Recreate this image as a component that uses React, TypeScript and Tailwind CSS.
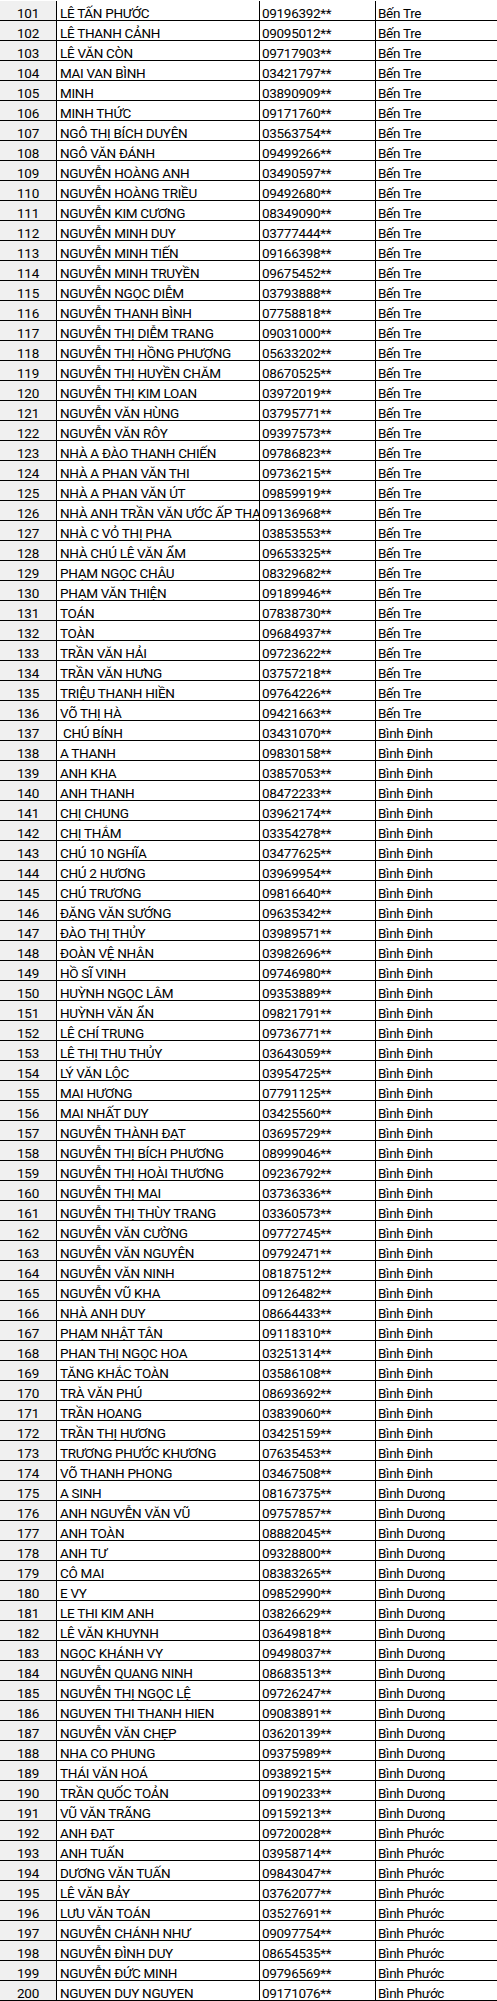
import React from "react";

type Row = [number, string, string, string];

const BT = "Bến Tre";
const BD = "Bình Định";
const BDu = "Bình Dương";
const BP = "Bình Phước";

const rows: Row[] = [
  [101, "LÊ TẤN PHƯỚC", "09196392**", BT],
  [102, "LÊ THANH CẢNH", "09095012**", BT],
  [103, "LÊ VĂN CÒN", "09717903**", BT],
  [104, "MAI VAN BÌNH", "03421797**", BT],
  [105, "MINH", "03890909**", BT],
  [106, "MINH THỨC", "09171760**", BT],
  [107, "NGÔ THỊ BÍCH DUYÊN", "03563754**", BT],
  [108, "NGÔ VĂN ĐÁNH", "09499266**", BT],
  [109, "NGUYỄN HOÀNG ANH", "03490597**", BT],
  [110, "NGUYỄN HOÀNG TRIỀU", "09492680**", BT],
  [111, "NGUYỄN KIM CƯƠNG", "08349090**", BT],
  [112, "NGUYỄN MINH DUY", "03777444**", BT],
  [113, "NGUYỄN MINH TIẾN", "09166398**", BT],
  [114, "NGUYỄN MINH TRUYỀN", "09675452**", BT],
  [115, "NGUYỄN NGỌC DIỄM", "03793888**", BT],
  [116, "NGUYỄN THANH BÌNH", "07758818**", BT],
  [117, "NGUYỄN THỊ DIỄM TRANG", "09031000**", BT],
  [118, "NGUYỄN THỊ HỒNG PHƯỢNG", "05633202**", BT],
  [119, "NGUYỄN THỊ HUYỀN CHĂM", "08670525**", BT],
  [120, "NGUYỄN THỊ KIM LOAN", "03972019**", BT],
  [121, "NGUYỄN VĂN HÙNG", "03795771**", BT],
  [122, "NGUYỄN VĂN RÔY", "09397573**", BT],
  [123, "NHÀ A ĐÀO THANH CHIẾN", "09786823**", BT],
  [124, "NHÀ A PHAN VĂN THI", "09736215**", BT],
  [125, "NHÀ A PHAN VĂN ÚT", "09859919**", BT],
  [126, "NHÀ ANH TRẦN VĂN ƯỚC ẤP THẠNH", "09136968**", BT],
  [127, "NHÀ C VỎ THỊ PHA", "03853553**", BT],
  [128, "NHÀ CHÚ LÊ VĂN ẨM", "09653325**", BT],
  [129, "PHẠM NGỌC CHÂU", "08329682**", BT],
  [130, "PHẠM VĂN THIỆN", "09189946**", BT],
  [131, "TOÁN", "07838730**", BT],
  [132, "TOÀN", "09684937**", BT],
  [133, "TRẦN VĂN HẢI", "09723622**", BT],
  [134, "TRẦN VĂN HƯNG", "03757218**", BT],
  [135, "TRIỆU THANH HIỀN", "09764226**", BT],
  [136, "VÕ THỊ HÀ", "09421663**", BT],
  [137, " CHÚ BÍNH", "03431070**", BD],
  [138, "A THANH", "09830158**", BD],
  [139, "ANH KHA", "03857053**", BD],
  [140, "ANH THANH", "08472233**", BD],
  [141, "CHỊ CHUNG", "03962174**", BD],
  [142, "CHỊ THẮM", "03354278**", BD],
  [143, "CHÚ 10 NGHĨA", "03477625**", BD],
  [144, "CHÚ 2 HƯƠNG", "03969954**", BD],
  [145, "CHÚ TRƯƠNG", "09816640**", BD],
  [146, "ĐẶNG VĂN SƯỚNG", "09635342**", BD],
  [147, "ĐÀO THỊ THỦY", "03989571**", BD],
  [148, "ĐOÀN VỆ NHÂN", "03982696**", BD],
  [149, "HỒ SĨ VINH", "09746980**", BD],
  [150, "HUỲNH NGỌC LÂM", "09353889**", BD],
  [151, "HUỲNH VĂN ẨN", "09821791**", BD],
  [152, "LÊ CHÍ TRUNG", "09736771**", BD],
  [153, "LÊ THỊ THU THỦY", "03643059**", BD],
  [154, "LÝ VĂN LỘC", "03954725**", BD],
  [155, "MAI HƯƠNG", "07791125**", BD],
  [156, "MAI NHẤT DUY", "03425560**", BD],
  [157, "NGUYỄN THÀNH ĐẠT", "03695729**", BD],
  [158, "NGUYỄN THỊ BÍCH PHƯƠNG", "08999046**", BD],
  [159, "NGUYỄN THỊ HOÀI THƯƠNG", "09236792**", BD],
  [160, "NGUYỄN THỊ MAI", "03736336**", BD],
  [161, "NGUYỄN THỊ THÙY TRANG", "03360573**", BD],
  [162, "NGUYỄN VĂN CƯỜNG", "09772745**", BD],
  [163, "NGUYỄN VĂN NGUYÊN", "09792471**", BD],
  [164, "NGUYỄN VĂN NINH", "08187512**", BD],
  [165, "NGUYỄN VŨ KHA", "09126482**", BD],
  [166, "NHÀ ANH DUY", "08664433**", BD],
  [167, "PHẠM NHẬT TÂN", "09118310**", BD],
  [168, "PHAN THỊ NGỌC HOA", "03251314**", BD],
  [169, "TĂNG KHẮC TOÀN", "03586108**", BD],
  [170, "TRÀ VĂN PHÚ", "08693692**", BD],
  [171, "TRẦN HOANG", "03839060**", BD],
  [172, "TRẦN THỊ HƯƠNG", "03425159**", BD],
  [173, "TRƯƠNG PHƯỚC KHƯƠNG", "07635453**", BD],
  [174, "VÕ THANH PHONG", "03467508**", BD],
  [175, "A SINH", "08167375**", BDu],
  [176, "ANH NGUYỄN VĂN VŨ", "09757857**", BDu],
  [177, "ANH TOÀN", "08882045**", BDu],
  [178, "ANH TƯ", "09328800**", BDu],
  [179, "CÔ MAI", "08383265**", BDu],
  [180, "E VY", "09852990**", BDu],
  [181, "LE THI KIM ANH", "03826629**", BDu],
  [182, "LÊ VĂN KHUYNH", "03649818**", BDu],
  [183, "NGỌC KHÁNH VY", "09498037**", BDu],
  [184, "NGUYỄN QUANG NINH", "08683513**", BDu],
  [185, "NGUYỄN THỊ NGỌC LỆ", "09726247**", BDu],
  [186, "NGUYEN THI THANH HIEN", "09083891**", BDu],
  [187, "NGUYỄN VĂN CHẸP", "03620139**", BDu],
  [188, "NHA CO PHUNG", "09375989**", BDu],
  [189, "THÁI VĂN HOÁ", "09389215**", BDu],
  [190, "TRẦN QUỐC TOẢN", "09190233**", BDu],
  [191, "VŨ VĂN TRÃNG", "09159213**", BDu],
  [192, "ANH ĐẠT", "09720028**", BP],
  [193, "ANH TUẤN", "03958714**", BP],
  [194, "DƯƠNG VĂN TUẤN", "09843047**", BP],
  [195, "LÊ VĂN BẢY", "03762077**", BP],
  [196, "LƯU VĂN TOÁN", "03527691**", BP],
  [197, "NGUYỄN CHÁNH NHƯ", "09097754**", BP],
  [198, "NGUYỄN ĐÌNH DUY", "08654535**", BP],
  [199, "NGUYỄN ĐỨC MINH", "09796569**", BP],
  [200, "NGUYEN DUY NGUYEN", "09171076**", BP],
];

export default function App() {
  return (
    <div
      className="w-[497px] bg-white pt-[1px] text-black text-[13.5px] tracking-[-0.3px]"
      style={{ fontFamily: "Roboto, 'Liberation Sans', sans-serif" }}
    >
      {rows.map(([n, name, phone, prov]) => (
        <div key={n} className="flex h-[20px] border-b border-black">
          <div className="w-[57px] shrink-0 border-r border-black bg-[#f0f0f0] text-center leading-[19px] pt-[3px] overflow-hidden whitespace-nowrap">
            {n}
          </div>
          <div className="w-[203px] shrink-0 border-r border-black pl-[3px] leading-[19px] pt-[3px] overflow-hidden whitespace-pre">
            {name}
          </div>
          <div className="w-[116px] shrink-0 border-r border-black pl-[2px] leading-[19px] pt-[3px] overflow-hidden whitespace-nowrap">
            {phone}
          </div>
          <div className="flex-1 pl-[2px] leading-[19px] pt-[3px] overflow-hidden whitespace-nowrap">
            {prov}
          </div>
        </div>
      ))}
    </div>
  );
}
